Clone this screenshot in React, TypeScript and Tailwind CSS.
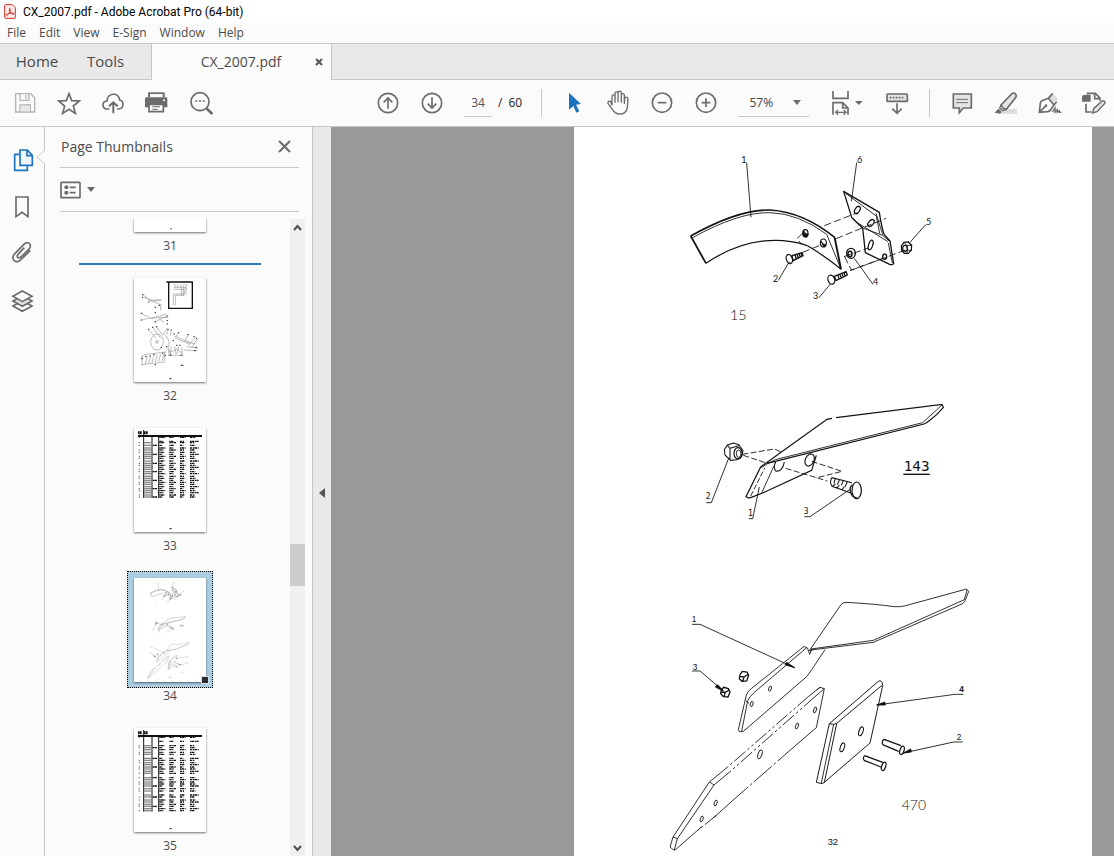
import { useState, type ReactNode } from "react";

const MENUS = ["File", "Edit", "View", "E-Sign", "Window", "Help"];

type IconProps = { children: ReactNode; className?: string; box?: string };

// All icons are drawn on a 72 unit grid and shown at 24px
function Icon({ children, className = "size-6", box = "0 0 72 72" }: IconProps) {
  return (
    <svg
      viewBox={box}
      className={`${className} shrink-0 overflow-visible`}
      fill="none"
      stroke="currentColor"
      strokeWidth={5}
      aria-hidden="true"
    >
      {children}
    </svg>
  );
}

function ToolButton({ label, children, className = "w-11 text-[#6b6b6b]" }: { label: string; children: ReactNode; className?: string }) {
  return (
    <button type="button" aria-label={label} className={`h-full shrink-0 flex items-center justify-center ${className}`}>
      {children}
    </button>
  );
}

/* Toolbar */

function Toolbar() {
  const [page, setPage] = useState("34");
  const [zoom, setZoom] = useState("57%");

  return (
    <div className="h-[47px] shrink-0 flex items-center pl-[3px] bg-[#fbfbfb] border-b border-[#c6c6c6] overflow-hidden">
      <ToolButton label="Save" className="w-11 text-[#b4b4b4]">
        <Icon>
          <path d="M8 8h45l12 12v43H8z" strokeWidth={4} />
          <path d="M21 8v20h27V8M39 12v11M21 63V42h31v21" strokeWidth={4} />
          <path d="M23 44h27v17H23z" fill="#e8e8e8" stroke="none" />
        </Icon>
      </ToolButton>
      <ToolButton label="Add to favorites">
        <Icon>
          <path d="M36 8l8 21 23 1-18 15 6 22-19-12-19 12 6-22L5 30l23-1z" />
        </Icon>
      </ToolButton>
      <ToolButton label="Upload">
        <Icon>
          <path d="M25 54h-7c-16-1-16-23 0-24 1-25 34-28 38-3 14 3 13 26-3 27h-5" />
          <path d="M37 67V34M24 46l13-12 13 12" strokeWidth={6} />
        </Icon>
      </ToolButton>
      <ToolButton label="Print">
        <Icon>
          <path d="M9 4h50v14H9z" fill="currentColor" stroke="none" />
          <path d="M15 9h38v9H15z" fill="#fbfbfb" stroke="none" />
          <path d="M5 19h58q4 0 4 4v26H0V23q0-4 5-4z" fill="currentColor" stroke="none" />
          <path d="M12 40h43v22H12z" fill="#fbfbfb" />
          <path d="M22 47h23M22 55h16" strokeWidth={3} />
          <circle cx="57" cy="28" r="3" fill="#fbfbfb" stroke="none" />
        </Icon>
      </ToolButton>
      <ToolButton label="Find text">
        <Icon>
          <circle cx="33" cy="32" r="27" />
          <path d="M52 52l18 17" strokeWidth={8} />
          <path d="M19 30h6M30 30h6M41 30h6" />
        </Icon>
      </ToolButton>

      <div className="w-[143px] shrink-0" />

      <ToolButton label="Previous page">
        <Icon>
          <circle cx="36" cy="36" r="29" />
          <path d="M36 53V21M23 34l13-13 13 13" />
        </Icon>
      </ToolButton>
      <ToolButton label="Next page">
        <Icon>
          <circle cx="36" cy="36" r="29" />
          <path d="M36 19v32M23 38l13 13 13-13" />
        </Icon>
      </ToolButton>
      <div className="h-[28px] ml-[10px] flex items-center text-xs text-[#222]">
        <input
          aria-label="Page number"
          value={page}
          onChange={(e) => setPage(e.target.value)}
          className="w-7 h-full text-center text-[#555] bg-transparent border-b border-[#c6c6c6] outline-none"
        />
        <span className="ml-[6px]">/</span>
        <span className="w-[22px] ml-[6px]">60</span>
      </div>
      <div className="w-px h-7 ml-[11px] mr-[10px] bg-[#c6c6c6] shrink-0" />
      <ToolButton label="Select tool" className="w-11 text-[#1e73be]">
        <Icon>
          <path d="M21 5l36 34-15 2 10 20-9 4-9-20-13 11z" fill="currentColor" stroke="none" />
        </Icon>
      </ToolButton>
      <ToolButton label="Hand tool">
        <Icon>
          <path
            d="M18 43V17c0-7 9-7 9 0v18V8c0-7 9-7 9 0v26V6c0-7 10-7 10 0v29V13c0-7 9-7 9 0v26l1-16c1-7 10-6 10 1L64 49c-2 13-11 20-22 20-13 0-18-6-23-14L6 37c-2-6 5-8 9-4z"
            strokeWidth={4}
          />
        </Icon>
      </ToolButton>
      <ToolButton label="Zoom out">
        <Icon>
          <circle cx="36" cy="35" r="29" />
          <path d="M23 35h26" />
        </Icon>
      </ToolButton>
      <ToolButton label="Zoom in">
        <Icon>
          <circle cx="36" cy="35" r="29" />
          <path d="M23 35h26M36 22v26" />
        </Icon>
      </ToolButton>
      <div className="w-[71px] h-[28px] ml-[10px] shrink-0 flex items-center border-b border-[#c6c6c6] text-[#6b6b6b]">
        <select
          aria-label="Zoom level"
          value={zoom}
          onChange={(e) => setZoom(e.target.value)}
          className="flex-1 h-full pl-[11px] text-xs text-[#444] bg-transparent appearance-none outline-none"
        >
          <option>57%</option>
          <option>75%</option>
          <option>100%</option>
        </select>
        <Caret />
        <span className="w-2" />
      </div>
      <ToolButton label="Fit page" className="w-[66px] pl-[23px] pr-[7px] text-[#6b6b6b]">
        <Icon box="0 0 108 72" className="w-9 h-6">
          <path d="M3 0v22h45V0" />
          <path d="M3 71V35h29l16 16v20M32 35v16h16" />
          <path d="M12 64h29M18 57l-7 7 7 7M35 57l7 7-7 7" strokeWidth={4} />
          <path d="M69 30h23L80 42z" fill="currentColor" stroke="none" />
        </Icon>
      </ToolButton>
      <ToolButton label="Scrolling mode">
        <Icon>
          <rect x="6" y="9" width="61" height="22" rx="2" fill="#e4e4e4" />
          <path d="M14 20h5M23 20h5M32 20h5M41 20h5M50 20h5" />
          <path d="M36 37v30M22 53l14 14 14-14" />
        </Icon>
      </ToolButton>
      <div className="w-px h-7 mx-[10px] bg-[#c6c6c6] shrink-0" />
      <ToolButton label="Add comment">
        <Icon>
          <path d="M10 9h54v42H40L28 65V51H10z" fill="#e4e4e4" />
          <path d="M19 25h35M19 35h35" strokeWidth={3} />
        </Icon>
      </ToolButton>
      <ToolButton label="Highlight">
        <Icon>
          <path d="M36 54h33v15H20z" fill="#dedede" stroke="none" />
          <path d="M21 42L54 8q5-4 10 0 4 4 2 10L37 55l-10-3z" fill="#e4e4e4" />
          <path d="M21 42l-4 9 9 8 11-4" strokeWidth={4} />
          <path d="M13 53l11 10-6 5-16-3z" fill="currentColor" stroke="none" />
        </Icon>
      </ToolButton>
      <ToolButton label="Sign">
        <Icon>
          <path d="M44 8l16 15-9 15-18-16z" fill="#dedede" stroke="none" />
          <path d="M31 22L12 29q-5 2-5 9L4 64l25-2q7-1 9-6l10-14zM31 22L44 7M48 42l8-10M5 63l17-17" />
          <circle cx="24" cy="44" r="4" fill="currentColor" stroke="none" />
          <path d="M43 63l8-12v13l7-8v8l6-5 1 5h5" strokeWidth={4} />
        </Icon>
      </ToolButton>
      <ToolButton label="Edit PDF">
        <Icon>
          <path d="M0 18q0-6 6-6h20v20H0z" fill="currentColor" stroke="none" />
          <path d="M17 11V7h23l14 14v8M38 8v15h15M12 38v25h17" />
          <path d="M32 66l3-13 26-24q8 0 8 8L45 62z" fill="#e4e4e4" strokeWidth={4} />
        </Icon>
      </ToolButton>
    </div>
  );
}

function Caret() {
  return (
    <svg viewBox="0 0 8 5" className="w-2 h-[5px] shrink-0" aria-hidden="true">
      <path d="M0 0h8L4 5z" fill="#6b6b6b" />
    </svg>
  );
}

/* Parts drawing, three figures on one sheet */

function PartsSheet({ box, className, stroke }: { box: string; className: string; stroke: number }) {
  return (
    <svg viewBox={box} preserveAspectRatio="xMidYMin slice" className={className} fill="none" stroke="#111" strokeWidth={stroke}>
      {/* Figure 15 */}
      <g transform="translate(288 39)">
        <path d="M230 68l13 164M560 68l-16 116M325 421l33-56M447 473l35-42M609 433l-56-78M768 253l-48 54" />
        <path d="M62 288Q205 208 300 210Q400 216 495 293" strokeWidth={stroke * 1.8} />
        <path d="M66 294Q205 216 300 218Q385 220 470 283L512 385" />
        <path d="M62 288l46 82" strokeWidth={stroke * 2} />
        <path d="M108 370Q210 300 320 301Q400 304 430 328Q480 360 512 387" strokeWidth={stroke * 1.4} />
        <path d="M494 293l19 95" strokeWidth={stroke * 2.2} />
        <path d="M397 280l-15 15 12 18M463 257l97-38M498 296l150-61M398 337l62-25M522 350l73-26M524 350l20 40 104-38M540 392l108-40 58-22" strokeDasharray="22 9" />
        <ellipse cx="406" cy="280" rx="8" ry="11" strokeWidth={stroke * 1.3} />
        <path d="M401 272q5 12 14 10l-5 10q-10 0-11-12z" fill="#111" />
        <ellipse cx="460" cy="309" rx="9" ry="12" strokeWidth={stroke * 1.3} />
        <path d="M453 303q7 14 15 9l-6 10z" fill="#111" />
        <path d="M521 154l107 63q6 40 14 66l18 20 11 68q-4 5-12 2l-73-35-8-74q-22-20-33-32z" strokeWidth={stroke * 1.5} strokeLinejoin="round" />
        <path d="M548 234l30 30 60 22 20 17M527 160l92 68 10 52M655 309l12 60M562 248l92 57M618 220l20 64" />
        <ellipse cx="562" cy="210" rx="7" ry="12" transform="rotate(32 562 210)" strokeWidth={stroke * 1.5} />
        <ellipse cx="603" cy="249" rx="7" ry="12" transform="rotate(42 603 249)" strokeWidth={stroke * 1.5} />
        <ellipse cx="602" cy="315" rx="6" ry="15" transform="rotate(18 602 315)" strokeWidth={stroke * 1.5} />
        <ellipse cx="644" cy="350" rx="6" ry="8" strokeWidth={stroke * 1.5} />
        {/* Screws, washer and nut */}
        <ellipse cx="358" cy="357" rx="9" ry="14" transform="rotate(-18 358 357)" strokeWidth={stroke * 1.4} />
        <path d="M366 347l30-9 3 9-30 15zM375 344l4 13M381 342l4 12M387 340l4 11M393 339l4 10" strokeWidth={stroke * 1.5} />
        <ellipse cx="484" cy="419" rx="10" ry="14" transform="rotate(-18 484 419)" strokeWidth={stroke * 1.4} />
        <path d="M493 409l35-14 4 10-34 17zM504 406l4 12M510 403l4 12M516 400l4 12M522 398l4 11" strokeWidth={stroke * 1.5} />
        <ellipse cx="543" cy="340" rx="13" ry="15" strokeWidth={stroke * 1.5} />
        <ellipse cx="540" cy="342" rx="6" ry="8" strokeWidth={stroke * 1.7} />
        <path d="M694 318l8-11 13-1 10 10-1 15-9 9h-12l-8-9z" strokeWidth={stroke * 1.4} />
        <ellipse cx="705" cy="325" rx="7" ry="9" strokeWidth={stroke * 1.4} />
        <path d="M702 307l8 9 15 0M710 316l3 15-3 9M713 331l11 0" />
        <g fill="#111" stroke="none" fontFamily="Lato, sans-serif" fontSize="27">
          <text x="214" y="68">1</text>
          <text x="561" y="69">6</text>
          <text x="768" y="255">5</text>
          <text x="309" y="427">2</text>
          <text x="429" y="477">3</text>
          <text x="609" y="435">4</text>
          <text x="180" y="540" fontSize="43" fontWeight="300">15</text>
        </g>
      </g>

      {/* Figure 143 */}
      <g transform="translate(348 789)">
        <path d="M426 85l-15 3-142 102-57 41-44 89q4 5 14 3l36-14 147-68 14-45M438 83l318-40 4 9-20 22-28 23-10 5-470 118" strokeWidth={stroke * 1.4} />
        <path d="M698 98l-442 111-22 11-20 13M756 45l-58 53M252 227l-37 82" />
        <path d="M182 318l42-84" strokeDasharray="16 6" />
        <path d="M157 193l96-16 24 10M160 196l72 24M287 235l125 38M365 214l91 30-78 20" strokeDasharray="18 7" />
        <path d="M257 216q-8 16 0 27 20 4 26-27" strokeWidth={stroke * 1.3} />
        <ellipse cx="359" cy="210" rx="13" ry="19" transform="rotate(24 359 210)" strokeWidth={stroke * 1.3} />
        <path d="M103 179l9-14 18-6 16 5 13 18-4 18-15 9-18 2-17-16zM112 165l8 10 0 32M120 175l26-8" strokeWidth={stroke * 1.2} />
        <ellipse cx="144" cy="190" rx="12" ry="17" strokeWidth={stroke * 1.3} />
        <ellipse cx="146" cy="191" rx="7" ry="11" />
        <path d="M486 278l-60-15q-9 12 0 26l57 20M436 266l-4 14M448 270l-6 14M460 272l-6 14M472 276l-7 14M426 290l10-8M440 295l8-10M455 300l8-10" strokeWidth={stroke * 1.2} />
        <ellipse cx="500" cy="301" rx="14" ry="25" strokeWidth={stroke * 1.4} />
        <path d="M487 284q-14 12 0 34l14 7" strokeWidth={stroke * 1.3} />
        <path d="M115 207L64 338H49M208 291l-20 95h-12M480 298L360 380h-17" />
        <path d="M640 253h79" strokeWidth={stroke * 1.6} />
        <g fill="#111" stroke="none" fontFamily="'DejaVu Sans Mono', monospace" fontSize="24">
          <text x="47" y="327">2</text>
          <text x="174" y="379">1</text>
          <text x="341" y="371">3</text>
          <text x="641" y="242" fontSize="43">143</text>
        </g>
      </g>

      {/* Figure 470 */}
      <g transform="translate(258 1359)">
        <path d="M448 212l95-138q5-6 15-7 90 5 145 13 15 1 30-2l187-51 6 7-10 27-8 10-268 116-188 23zM453 207l187-26 273-122 8-29M450 213l8-5M442 203l7 20 6-14" />
        <path d="M440 203q-8-8-15 2L275 325q-12 8-16 20l-24 104 3 6h11l192-166 14-20 40-60M440 203L283 337q-13 11-20 25l-18 92M257 362l10 8" />
        <ellipse cx="330" cy="326" rx="4" ry="8" transform="rotate(15 330 326)" />
        <ellipse cx="275" cy="372" rx="4" ry="8" transform="rotate(15 275 372)" />
        <path d="M470 330l10-8 13 4-24 117-63 54M30 801l12 10 8-5 74-65M30 801l9-30 109-165M39 771l13 5-9 34M52 776l110-161-13-9M480 322l-34 27M493 326l-28 24M148 606l55-45M162 615l48-40M162 712l60-54" />
        <path d="M446 349L203 561M465 350L210 575M169 706l-55 45" strokeDasharray="44 8 8 8 8 8" />
        <path d="M406 497L222 658" strokeDasharray="70 8 8 8" />
        <ellipse cx="300" cy="523" rx="6" ry="14" transform="rotate(18 300 523)" />
        <ellipse cx="465" cy="390" rx="4" ry="9" transform="rotate(18 465 390)" />
        <ellipse cx="411" cy="438" rx="4" ry="9" transform="rotate(18 411 438)" />
        <ellipse cx="167" cy="669" rx="4" ry="9" transform="rotate(18 167 669)" />
        <ellipse cx="125" cy="717" rx="4" ry="9" transform="rotate(18 125 717)" />
        <path d="M508 431l147-127q12-6 13 13l-38 172-136 117-8 5-17-4zM508 431l13 2 9-3 136-114M530 431l-37 177" strokeWidth={stroke * 1.1} />
        <path d="M521 433l-37 176" />
        <ellipse cx="603" cy="454" rx="6" ry="14" transform="rotate(18 603 454)" strokeWidth={stroke * 1.2} />
        <ellipse cx="547" cy="502" rx="6" ry="14" transform="rotate(18 547 502)" strokeWidth={stroke * 1.2} />
        <path d="M672 478l51 19M668 494l48 20M672 478q-8 4-4 16M614 527l54 20M612 541l51 20M614 527q-6 4-2 14" strokeWidth={stroke * 1.4} />
        <ellipse cx="726" cy="511" rx="6" ry="13" transform="rotate(18 726 511)" strokeWidth={stroke * 1.4} />
        <ellipse cx="671" cy="559" rx="6" ry="13" transform="rotate(18 671 559)" strokeWidth={stroke * 1.4} />
        <path d="M240 284l7-10 14 2 5 10-6 17-14 1-8-8zM240 289l12 2 12-8M252 291l-4 13M184 330l7-8 14 4 5 10-6 15-14-1-8-9zM184 336l12 1 12-7M196 337l-4 13" strokeWidth={stroke * 1.5} />
        <path d="M96 133h24l284 130M96 273h24l68 58M910 343h-25L650 375M908 486h-27L730 519" />
        <path d="M404 263l-29-9 5-7zM191 334l-25-13 7-7zM650 375l24-9 2 9zM730 519l22-12 2 9z" fill="#111" />
        <g fill="#111" stroke="none" fontFamily="'Liberation Sans', Arial, sans-serif" fontSize="25">
          <text x="95" y="127">1</text>
          <text x="98" y="270">3</text>
          <text x="898" y="336" fontWeight="bold">4</text>
          <text x="890" y="479">2</text>
          <text x="503" y="795" fontSize="28">32</text>
          <text x="725" y="690" fontFamily="Lato, sans-serif" fontSize="42" fontWeight="300">470</text>
        </g>
      </g>
    </svg>
  );
}

/* Thumbnails */

function Thumb({ children }: { children?: ReactNode }) {
  return (
    <svg viewBox="0 0 216 312" className="w-[72px] h-[104px]" fill="none" stroke="#333" strokeWidth={2} aria-hidden="true">
      {children}
    </svg>
  );
}

function AssemblyThumb() {
  return (
    <Thumb>
      <path d="M97 12h8M104 12h71v79h-71z" stroke="#111" strokeWidth={4} />
      <g stroke="#999">
        <path d="M118 82V48h34M124 82V52h28M118 28h38v6h-38M142 28v24M148 28v26M120 18l6 10M130 18l3 10M141 18v10M151 18l-4 10M160 18l-8 14M160 32l-10 16M158 50l-10-16" />
        <path d="M26 50l28 20M44 66h38l-26 4M30 58l54 24M80 82v16M24 108l22 10M24 126l24-6 56-2M48 122l50-14M62 132l36-18M76 122l14 12M44 156l22 24M56 148l24 32M66 146l20 26 14-22" />
        <ellipse cx="69" cy="192" rx="19" ry="24" />
        <circle cx="69" cy="192" r="4" />
        <path d="M92 170q20 20 10 40l10 22M102 156l-4 14M112 160l-4 14M122 174l46 20M122 180l44 18M134 164l-10 14M164 170l-12 18M154 190l30 8M186 176l-22 26M190 184l-18 26M158 206l34 4M150 216l40 2" />
        <path d="M22 240l10-10 64-8M22 260l70-8M24 262V232M34 258l6-22M44 256l6-22M54 254l6-22M64 252l6-22M74 250l6-22M84 250l6-22M92 250V222M102 210l4 24M112 204l-4 26M122 206l4 22M134 206l-6 22M144 208v20M102 232h46l-18-20-20 10" />
      </g>
      <path
        d="M24 50h4M24 58h4M42 72h4M74 82h4M62 88h4M62 104h4M20 106h5M20 126h4M98 114h4M98 128h4M98 138h4M62 132h4M42 154h4M54 148h4M66 146h4M100 154h4M110 156h4M118 168h4M132 164h4M160 170h4M178 176h4M186 182h4M184 208h5M180 218h5M96 206h4M116 188h4M126 202h4M136 202h4M92 232h4M108 232h4M140 232h4M22 242h4M34 236h4M46 234h4M58 230h4M84 226h4M62 260h4M80 208h4M106 302h6M140 262h8"
        stroke="#222"
        strokeWidth={3}
      />
    </Thumb>
  );
}

const ROWS_33 = [28, 40, 44, 52, 60, 66, 73, 79, 85, 91, 99, 106, 112, 118, 124, 131, 137, 145, 151, 157, 163, 169, 176, 182, 188, 194, 201, 207];
const ROWS_35 = [28, 40, 53, 59, 65, 73, 79, 91, 97, 104, 110, 117, 123, 130, 136, 149, 155, 162, 168, 174, 182, 189, 201, 207, 216, 222, 229, 235, 242, 248];
const COLUMNS = [
  { x: 76, widths: [18, 12, 16, 10] },
  { x: 106, widths: [20, 14, 12] },
  { x: 138, widths: [15, 10, 17, 12] },
  { x: 168, widths: [16, 26, 14] },
];

function TableThumb({ rows }: { rows: number[] }) {
  const bottom = rows[rows.length - 1] + 3;
  return (
    <Thumb>
      <g stroke="#111">
        <path d="M12 14h12M30 14h12" strokeWidth={9} strokeDasharray="5 1" />
        <path d="M12 24h192" strokeWidth={6} />
        <path d={`M29 6V${bottom}M54 26V${bottom}M74 26V${bottom}`} strokeWidth={3} />
        {rows.map((y, i) => (
          <g key={y}>
            {i > 1 && <path d={`M30 ${y}h23`} stroke="#888" strokeWidth={4} />}
            {i % 3 !== 1 && <path d={`M14 ${y}h4`} strokeWidth={2} />}
            {i % 4 === 3 && <path d={`M56 ${y}h14`} strokeWidth={4} strokeDasharray="6 1" />}
            {COLUMNS.map((col, c) => (
              <path
                key={col.x}
                d={`M${col.x} ${y}h${col.widths[(i + c) % col.widths.length]}`}
                strokeWidth={4}
                strokeDasharray={(i + c) % 2 ? "7 2 4 1" : "4 1 8 2"}
              />
            ))}
          </g>
        ))}
        <path d="M107 302h6" strokeWidth={3} />
      </g>
    </Thumb>
  );
}

const PAGES = [
  { number: 31, art: <Thumb><path d="M108 302h6" /></Thumb> },
  { number: 32, art: <AssemblyThumb /> },
  { number: 33, art: <TableThumb rows={ROWS_33} /> },
  { number: 34, art: <PartsSheet box="0 0 1554 2244" className="w-[72px] h-[104px] opacity-70" stroke={4} /> },
  { number: 35, art: <TableThumb rows={ROWS_35} /> },
];

function ThumbnailPanel() {
  const [selected, setSelected] = useState(34);

  return (
    <aside className="w-[268px] shrink-0 flex flex-col bg-[#fbfbfb] border-r border-[#c6c6c6]">
      <div className="h-[41px] shrink-0 ml-[15px] mr-[13px] flex items-center justify-between border-b border-[#c6c6c6]">
        <h2 className="pl-px text-sm text-[#4b4b4b]">Page Thumbnails</h2>
        <button type="button" aria-label="Close panel" className="mr-2 text-[#6b6b6b]">
          <svg viewBox="0 0 14 14" className="size-[14px]" stroke="currentColor" strokeWidth={2} aria-hidden="true">
            <path d="M2 1l11 11M13 1L2 12" />
          </svg>
        </button>
      </div>
      <div className="h-11 shrink-0 ml-[15px] mr-[13px] flex items-center border-b border-[#c6c6c6]">
        <button type="button" aria-label="Thumbnail options" className="flex items-center gap-[6px] text-[#6b6b6b]">
          <Icon box="0 0 63 54" className="w-[21px] h-[18px]">
            <rect x="3" y="4" width="57" height="46" rx="2" />
            <circle cx="19" cy="19" r="6" fill="currentColor" stroke="none" />
            <circle cx="19" cy="35" r="6" fill="currentColor" stroke="none" />
            <path d="M29 19h18M29 35h18" />
          </Icon>
          <Caret />
        </button>
      </div>
      <div className="flex-1 min-h-0 mt-[7px] ml-[5px] mr-[7px] flex">
        <div className="flex-1 overflow-hidden">
          <ul className="-mt-[98px]">
            {PAGES.map((p) => (
              <li key={p.number} className="h-[150px] flex flex-col items-center">
                <button type="button" aria-label={`Page ${p.number}`} onClick={() => setSelected(p.number)} className="relative shrink-0">
                  <span
                    className={`h-[117px] w-[86px] flex items-center justify-center border border-dotted ${
                      selected === p.number ? "border-black bg-[#abcde2]" : "border-transparent"
                    }`}
                  >
                    <span className="bg-white shadow-[0_1px_2px_rgba(0,0,0,0.55)]">{p.art}</span>
                  </span>
                  {selected === p.number && <span className="absolute right-[5px] bottom-[5px] size-[6px] bg-[#2b2b2b] outline outline-[#cfe2ee]" />}
                </button>
                <span className="text-xs leading-4 text-[#4b4b4b]">{p.number}</span>
                {p.number === 31 && <span className="w-[182px] h-[2px] mt-[9px] bg-[#2f7ab9]" />}
              </li>
            ))}
          </ul>
        </div>
        <div className="w-[15px] flex flex-col items-center bg-[#f0f0f0] text-[#4b4b4b]">
          <ScrollArrow d="M1 6l3.500-4L8 6" />
          <div className="h-[308px] shrink-0" />
          <div className="w-full h-[42px] shrink-0 bg-[#cdcdcd]" />
          <div className="flex-1" />
          <ScrollArrow d="M1 2l3.500 4L8 2" />
        </div>
      </div>
    </aside>
  );
}

function ScrollArrow({ d }: { d: string }) {
  return (
    <span className="h-[17px] flex items-center">
      <svg viewBox="0 0 9 8" className="w-[9px] h-2" fill="none" stroke="currentColor" strokeWidth={2} aria-hidden="true">
        <path d={d} />
      </svg>
    </span>
  );
}

function NavRail() {
  const button = "w-11 h-[47px] flex items-center justify-center";
  return (
    <nav className="w-[45px] shrink-0 relative pt-[9px] bg-[#fbfbfb] border-r border-[#c6c6c6] text-[#6b6b6b]">
      <button type="button" aria-label="Page Thumbnails" className={`${button} text-[#1e73be]`}>
        <Icon>
          <path d="M27 19H14v48h38V54" />
          <path d="M30 6h22l15 16v30H30zM51 6v17h16" fill="#eef5fb" />
        </Icon>
      </button>
      <button type="button" aria-label="Bookmarks" className={button}>
        <Icon>
          <path d="M18 6h36v59L36 52 18 65z" />
        </Icon>
      </button>
      <button type="button" aria-label="Attachments" className={button}>
        <Icon>
          <path d="M61 25L35 51c-9 10-19 10-24 3-5-8-2-14 4-20L42 7c7-7 15-6 18 0s1 10-4 15L33 45c-8 6-15 0-9-8l19-20" strokeWidth={5} />
        </Icon>
      </button>
      <button type="button" aria-label="Layers" className={button}>
        <Icon>
          <path d="M9 51l28 16 29-16-10-6H19z" />
          <path d="M9 36l28 16 29-16-10-6H19z" fill="#e4e4e4" />
          <path d="M37 6l29 16-29 16L9 22z" fill="#fbfbfb" />
        </Icon>
      </button>
      <svg viewBox="0 0 9 14" className="absolute -right-px top-[23px] w-[9px] h-[14px]" aria-hidden="true">
        <path d="M9 0L1 7l8 7" fill="#fbfbfb" stroke="#c6c6c6" />
      </svg>
    </nav>
  );
}

export default function App() {
  return (
    <div className="h-screen flex flex-col overflow-hidden bg-[#fbfbfb] font-['Open_Sans','Noto_Sans',sans-serif]">
      <header className="shrink-0">
        <div className="h-[23px] flex items-center gap-[7px] pl-1 bg-white text-xs text-black">
          <svg viewBox="0 0 36 45" className="w-3 h-[15px]" fill="none" stroke="#d3302a" strokeWidth={3} aria-hidden="true">
            <path d="M5 2h20l9 9v29q0 3-3 3H5q-3 0-3-3V5q0-3 3-3z" fill="#fdeceb" />
            <path d="M8 34c7-4 10-11 11-17 0-6-4-5-3 0 1 7 8 14 13 14 4-1 0-5-6-4-5 0-10 2-14 4-3 2-3 4-1 3z" />
          </svg>
          <h1 className="font-['Roboto','Open_Sans',sans-serif]">CX_2007.pdf - Adobe Acrobat Pro (64-bit)</h1>
        </div>
        <div className="h-5 flex items-center gap-[13px] pl-[7px] text-xs text-[#4b4b4b]">
          {MENUS.map((m) => (
            <button key={m} type="button">{m}</button>
          ))}
        </div>
        <div className="h-[37px] flex bg-[#e9e9e9] border-y border-[#c6c6c6] text-sm text-[#4b4b4b]">
          <button type="button" className="w-[73px] pl-px text-[15px] text-center">Home</button>
          <button type="button" className="w-[78px] pr-[13px] text-[15px] text-center">Tools</button>
          <div className="w-[181px] -mb-px flex items-center bg-[#fbfbfb] border-x border-[#c6c6c6]">
            <button type="button" className="flex-1 pl-6 text-center">CX_2007.pdf</button>
            <button type="button" aria-label="Close tab" className="w-[25px] flex justify-center">
              <svg viewBox="0 0 8 8" className="size-2" stroke="#555" strokeWidth={2} aria-hidden="true">
                <path d="M1 1l6 6M7 1L1 7" />
              </svg>
            </button>
          </div>
        </div>
      </header>

      <Toolbar />

      <div className="flex-1 min-h-0 flex">
        <NavRail />
        <ThumbnailPanel />
        <button type="button" aria-label="Collapse panel" className="w-[18px] shrink-0 pt-[3px] flex items-center justify-center bg-[#e9e9e9]">
          <svg viewBox="0 0 6 10" className="w-[6px] h-[10px]" aria-hidden="true">
            <path d="M6 0v10L0 5z" fill="#555" />
          </svg>
        </button>
        <main className="flex-1 min-w-0 flex justify-end pr-[22px] overflow-hidden bg-[#999]">
          <div className="w-[518px] shrink-0 bg-white">
            <PartsSheet box="0 0 1554 2187" className="w-full h-[729px]" stroke={2.6} />
          </div>
        </main>
      </div>
    </div>
  );
}
